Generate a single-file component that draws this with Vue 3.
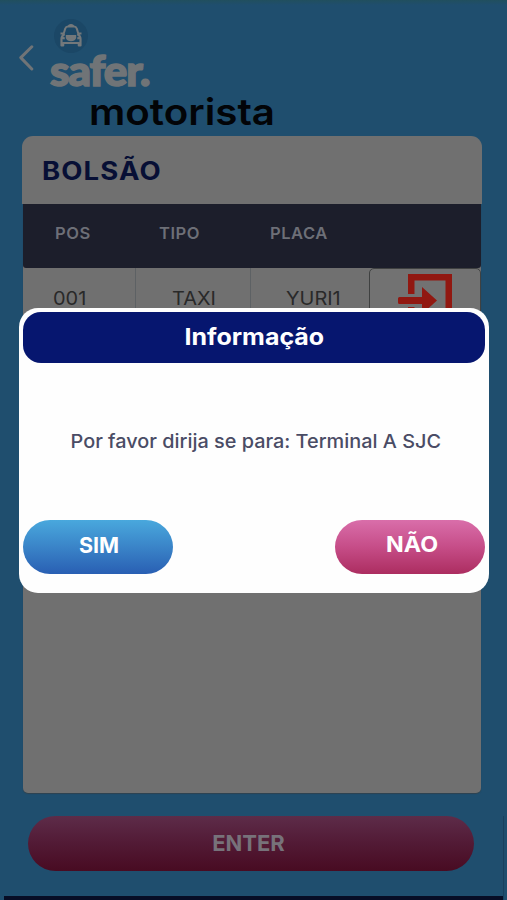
<script setup>
const columns = ['POS', 'TIPO', 'PLACA']
const row = { pos: '001', type: 'TAXI', plate: 'YURI1' }
</script>

<template>
  <div class="screen">
    <header class="top">
      <svg class="back" viewBox="0 0 16 26" aria-hidden="true">
        <path d="M13.800 1.800 L2.800 12.600 L13.800 24" />
      </svg>
      <div class="brand">
        <svg class="taxi" viewBox="0 0 34 34" aria-hidden="true">
          <circle class="taxi-disc" cx="17" cy="17" r="17" />
          <path class="taxi-line" d="M9.300 16 L11.200 9.600 Q12 7.600 14 7.600 H20 Q22 7.600 22.800 9.600 L24.700 16" />
          <path class="taxi-fill" d="M13.500 8 Q14 5 17 5 Q20 5 20.500 8 Z M6.500 13.500 h3 v2 h-3 Z M24.500 13.500 h3 v2 h-3 Z" />
          <path class="taxi-body" d="M10.500 15 Q7.500 17 7.500 20 V26.500 H9.200 V24 H24.800 V26.500 H26.500 V20 Q26.500 17 23.500 15" />
          <path class="taxi-fill" d="M11.800 16 H22.200 V19 Q20.800 22.200 17 22.200 Q13.200 22.200 11.800 19 Z M8 17.500 L11 18.500 L10.500 20.500 L8 20 Z M26 17.500 L23 18.500 L23.500 20.500 L26 20 Z" />
        </svg>
        <div class="logo"><span>safer.</span></div>
      </div>
      <div class="subtitle"><span>motorista</span></div>
    </header>

    <section class="card">
      <h1 class="title"><span>BOLSÃO</span></h1>
      <div class="table">
        <div class="thead">
          <span v-for="c in columns" :key="c">{{ c }}</span>
        </div>
        <div class="row">
          <div class="cell first"><span>{{ row.pos }}</span></div>
          <div class="cell second"><span>{{ row.type }}</span></div>
          <div class="cell third"><span>{{ row.plate }}</span></div>
          <button class="cell exit" aria-label="Sair">
            <svg viewBox="0 0 54 54" aria-hidden="true">
              <path d="M10 20 V0 H54 V54 H10 V33 H16.500 V47.500 H47.500 V6.500 H16.500 V20 Z" />
              <path d="M1.500 23 H24 V13 L39 26.500 L24 40 V30 H1.500 Q0 30 0 28.500 V24.500 Q0 23 1.500 23 Z" />
            </svg>
          </button>
        </div>
      </div>
    </section>

    <button class="enter"><span>ENTER</span></button>
    <div class="bottom"></div>
    <div class="edge"></div>

    <div class="modal" role="dialog">
      <div class="modal-head"><span>Informação</span></div>
      <p class="message"><span>Por favor dirija se para: Terminal A SJC</span></p>
      <div class="actions">
        <button class="action yes"><span>SIM</span></button>
        <button class="action no"><span>NÃO</span></button>
      </div>
    </div>
  </div>
</template>

<style>
body { margin: 0; background: #1f4e6e; }
</style>

<style scoped>
.screen {
  position: relative;
  box-sizing: border-box;
  width: 507px;
  height: 900px;
  display: flex;
  flex-direction: column;
  overflow: hidden;
  background: linear-gradient(#214f5e 0, #1f4e6e 5px, #1f4e6e);
  font-family: Inter, "Open Sans", sans-serif;
}
button { border: 0; padding: 0; font-family: inherit; }
span { display: inline-block; white-space: nowrap; transform-origin: left center; }
.top {
  height: 136px;
  flex: none;
  display: grid;
  grid-template-columns: 32px 1fr;
  grid-template-rows: 91px 45px;
  padding-left: 18px;
}
.back { width: 16px; height: 26px; margin-top: 45px; }
.back path { fill: none; stroke: #707477; stroke-width: 3; stroke-linecap: round; stroke-linejoin: round; }
.brand { padding-top: 19px; }
.taxi { display: block; width: 34px; height: 34px; margin-left: 4px; }
.taxi-disc { fill: #1b4766; }
.taxi-line { fill: none; stroke: #73787b; stroke-width: 2; }
.taxi-body { fill: none; stroke: #73787b; stroke-width: 2.200; stroke-linejoin: round; }
.taxi-fill { fill: #73787b; }
.logo {
  height: 40px;
  margin-top: -3px;
  font: 900 42px/40px Lato, sans-serif;
  letter-spacing: -1px;
  color: #707477;
  -webkit-text-stroke: 1.600px #707477;
}
.logo span { transform: scaleX(1.045); }
.subtitle {
  grid-column: 1 / -1;
  padding-left: 71px;
  font-size: 37px;
  line-height: 41px;
  font-weight: 600;
  color: #020407;
}
.subtitle span { transform: scaleX(1.09); }
.card {
  width: 460px;
  height: 657px;
  flex: none;
  margin-left: 22px;
}
.title {
  margin: 0;
  height: 68px;
  box-sizing: border-box;
  padding-left: 20px;
  border-radius: 11px 11px 0 0;
  background: #707070;
  font-size: 25px;
  line-height: 70px;
  font-weight: 700;
  letter-spacing: 1px;
  color: #070f35;
}
.title span { transform: scaleX(1.1); }
.table {
  box-sizing: border-box;
  height: 589px;
  margin: 0 1px;
  border-radius: 0 0 5px 5px;
  background: #707070;
  box-shadow: 0 1px 1px #30434f;
}
.thead {
  height: 64px;
  display: grid;
  grid-template-columns: 104px 111px 1fr;
  justify-items: start;
  padding-left: 32px;
  border-radius: 0 0 3px 3px;
  background: #1c1e2b;
  color: #6d6f77;
  font-size: 16px;
  font-weight: 600;
  line-height: 58px;
  letter-spacing: 0.5px;
}
.thead span { transform: scaleX(1.035); }
.row {
  display: grid;
  grid-template-columns: 113px 115px 118px 112px;
  height: 60px;
}
.cell {
  box-sizing: border-box;
  border-right: 1px solid #5d6164;
  color: #292929;
  font-size: 19px;
  line-height: 62px;
}
.cell span { transform: scaleX(1.05); }
.first { padding-left: 30px; }
.second { padding-left: 36px; }
.third { padding-left: 35px; border-right: 0; }
.exit {
  display: flex;
  justify-content: center;
  padding-top: 5px;
  border: 1px solid #3f4141;
  border-radius: 5px;
  background: #727272;
}
.exit svg { width: 54px; height: 54px; }
.exit path { fill: #911811; }
.enter {
  width: 446px;
  height: 55px;
  flex: none;
  margin: 23px 0 25px 28px;
  border-radius: 28px;
  background: linear-gradient(#5d2c49, #521a35 50%, #480b22);
  color: #77727a;
  font-size: 22px;
  font-weight: 700;
  line-height: 55px;
}
.enter span { margin-right: 5px; }
.bottom { height: 4px; margin: 0 4px; background: #070d25; }
.edge {
  position: absolute;
  right: 3px;
  bottom: 0;
  width: 1px;
  height: 84px;
  background: #1a405d;
}
.modal {
  position: absolute;
  left: 19px;
  top: 308px;
  box-sizing: border-box;
  width: 470px;
  height: 285px;
  padding: 3.500px 4px 20px;
  display: flex;
  flex-direction: column;
  border-radius: 19px;
  background: #fefefe;
}
.modal-head {
  height: 51px;
  border-radius: 18px;
  background: #06166f;
  color: #fff;
  font-size: 23px;
  font-weight: 700;
  line-height: 51px;
  text-align: center;
}
.modal-head span { transform-origin: center; transform: scaleX(1.085); }
.message {
  flex: 1;
  margin: 0;
  text-align: center;
  color: #4a4c65;
  font-size: 19px;
  font-weight: 500;
  line-height: 157px;
}
.message span { transform-origin: center; transform: translateX(1.500px) scaleX(1.045); }
.actions { display: flex; justify-content: space-between; }
.action {
  width: 150px;
  height: 54px;
  border-radius: 27px;
  color: #fff;
  font-size: 21.500px;
  font-weight: 700;
  line-height: 50px;
  padding-bottom: 4px;
}
.action span { transform-origin: center; }
.yes { background: linear-gradient(#49a8dd, #3a84c8 50%, #295fb3); }
.yes span { transform: translateX(1px); }
.no { background: linear-gradient(#d96eaa, #c64d88 50%, #ac2d60); }
.no span { transform: translate(2px, -1px) scaleX(1.08); }
</style>
